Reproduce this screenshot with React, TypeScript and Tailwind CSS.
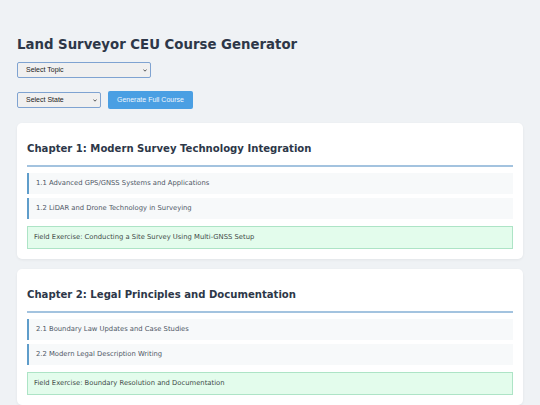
import React from "react";

type Chapter = {
  title: string;
  lessons: string[];
  exercise: string;
};

const chapters: Chapter[] = [
  {
    title: "Chapter 1: Modern Survey Technology Integration",
    lessons: [
      "1.1 Advanced GPS/GNSS Systems and Applications",
      "1.2 LiDAR and Drone Technology in Surveying",
    ],
    exercise: "Field Exercise: Conducting a Site Survey Using Multi-GNSS Setup",
  },
  {
    title: "Chapter 2: Legal Principles and Documentation",
    lessons: [
      "2.1 Boundary Law Updates and Case Studies",
      "2.2 Modern Legal Description Writing",
    ],
    exercise: "Field Exercise: Boundary Resolution and Documentation",
  },
];

const SmallSelect = ({ label, width }: { label: string; width: string }) => {
  return (
    <div className={`relative ${width} h-[16px]`}>
      <select className="block appearance-none w-full h-full border border-[#7fa3d1] rounded-[2px] bg-[#f0f0f0] pl-[8px] pr-[12px] text-[7px] leading-[14px] text-[#222]">
        <option>{label}</option>
      </select>
      <svg
        className="absolute right-[4px] top-[7px] pointer-events-none"
        width="4"
        height="3"
        viewBox="0 0 4 3"
      >
        <path d="M0.4 0.5 L2 2.2 L3.6 0.5" fill="none" stroke="#333" strokeWidth="0.8" />
      </svg>
    </div>
  );
};

const ChapterCard = ({ chapter }: { chapter: Chapter }) => {
  return (
    <div className="bg-white rounded-[5px] px-[10px] pt-[20px] pb-[10px] shadow-[0_1px_3px_rgba(0,0,0,0.06)]">
      <h2 className="text-[10.1px] leading-[normal] font-bold text-[#2d3748] pb-[11px] border-b-2 border-[#a3c3df]">
        {chapter.title}
      </h2>
      <div className="mt-[6px] flex flex-col gap-[4px]">
        {chapter.lessons.map((lesson) => (
          <div
            key={lesson}
            className="h-[21px] flex items-center pl-[7px] border-l-2 border-[#5f9dca] bg-[#f7f9fa] text-[6.8px] text-[#4f5866]"
          >
            {lesson}
          </div>
        ))}
      </div>
      <div className="mt-[7px] h-[23px] flex items-center px-[6px] border border-[#ade4c6] bg-[#e3fcec] text-[6.8px] text-[#3f4b48]">
        {chapter.exercise}
      </div>
    </div>
  );
};

const App = () => {
  return (
    <div
      className="min-h-screen bg-[#eff2f5] px-[17px] pt-[37px] pb-[10px]"
      style={{ fontFamily: '"DejaVu Sans", Verdana, sans-serif' }}
    >
      <h1 className="text-[13.3px] leading-[normal] font-bold text-[#2d3748]">
        Land Surveyor CEU Course Generator
      </h1>

      <div
        className="mt-[10px] flex flex-col gap-[13px]"
        style={{ fontFamily: '"Liberation Sans", Arial, sans-serif' }}
      >
        <SmallSelect label="Select Topic" width="w-[134px]" />
        <div className="flex items-center gap-[7px]">
          <SmallSelect label="Select State" width="w-[84px]" />
          <button className="h-[18px] px-[9px] rounded-[2px] bg-[#4a9fe3] text-[7px] text-[#eef6fd]">
            Generate Full Course
          </button>
        </div>
      </div>

      <div className="mt-[14px] flex flex-col gap-[10px]">
        {chapters.map((chapter) => (
          <ChapterCard key={chapter.title} chapter={chapter} />
        ))}
      </div>
    </div>
  );
};

export default App;
